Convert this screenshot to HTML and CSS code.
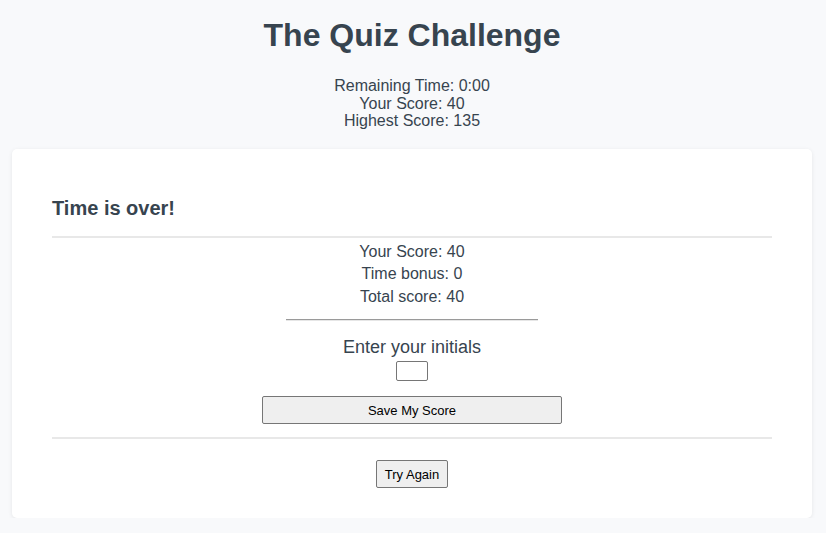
FILE: index.html
```html
<!DOCTYPE html>
<html>
<head>
<meta charset="utf-8">
<link rel="stylesheet" href="styles.css">
</head>
<body>
<header class="top">
  <h1 class="title">The Quiz Challenge</h1>
  <div class="stats">
    <div>Remaining Time: 0:00</div>
    <div>Your Score: 40</div>
    <div>Highest Score: 135</div>
  </div>
</header>
<main class="card">
  <h3 class="card-title">Time is over!</h3>
  <hr class="rule">
  <div class="results">
    <p class="line">Your Score: 40</p>
    <p class="line">Time bonus: 0</p>
    <p class="line">Total score: 40</p>
    <hr class="short">
    <label class="label" for="ini">Enter your initials</label>
    <input class="initials" id="ini" type="text">
    <button class="save">Save My Score</button>
  </div>
  <hr class="rule">
  <div class="again-row"><button class="again">Try Again</button></div>
</main>
</body>
</html>
```
FILE: styles.css
```css
html, body {
  margin: 0;
  padding: 0;
  background: #f8f9fb;
}
body {
  font-family: "Liberation Sans", Arial, sans-serif;
  color: #37444f;
  margin-right: 2px;
}
.top {
  text-align: center;
  padding-top: 17px;
}
.title {
  font-size: 32px;
  font-weight: bold;
  margin: 0 0 23px;
}
.stats {
  font-size: 16px;
  line-height: 17.5px;
}
.card {
  margin: 19px 12px 0;
  background: #fff;
  border-radius: 5px;
  box-shadow: 0 1px 4px rgba(0,0,0,0.08);
  padding: 40px 40px 30px;
}
.card-title {
  font-size: 20px;
  font-weight: bold;
  margin: 8px 0 16px;
}
.rule {
  border: 0;
  height: 2px;
  background: #e8e8e8;
  margin: 0;
}
.results {
  display: flex;
  flex-direction: column;
  align-items: center;
  padding: 3px 0 13px;
}
.line {
  margin: 0;
  font-size: 16px;
  line-height: 22.5px;
}
.short {
  width: 35%;
  margin: 11px 0 16px;
  border: 0;
  border-top: 1px solid #9a9a9a;
  border-bottom: 1px solid #e6e6e6;
}
.label {
  font-size: 18px;
  line-height: 21px;
}
.initials {
  width: 32px;
  height: 20px;
  box-sizing: border-box;
  border: 1px solid #767676;
  border-radius: 2px;
  margin: 3px 0 15px;
  padding: 0;
}
button {
  font-family: "Liberation Sans", Arial, sans-serif;
  font-size: 13px;
  color: #000;
  background: #efefef;
  border: 1px solid #767676;
  border-radius: 2px;
  height: 28px;
}
.save {
  width: 300px;
}
.again-row {
  display: flex;
  justify-content: center;
  padding-top: 21px;
}
.again {
  padding: 0 8px;
}
```
